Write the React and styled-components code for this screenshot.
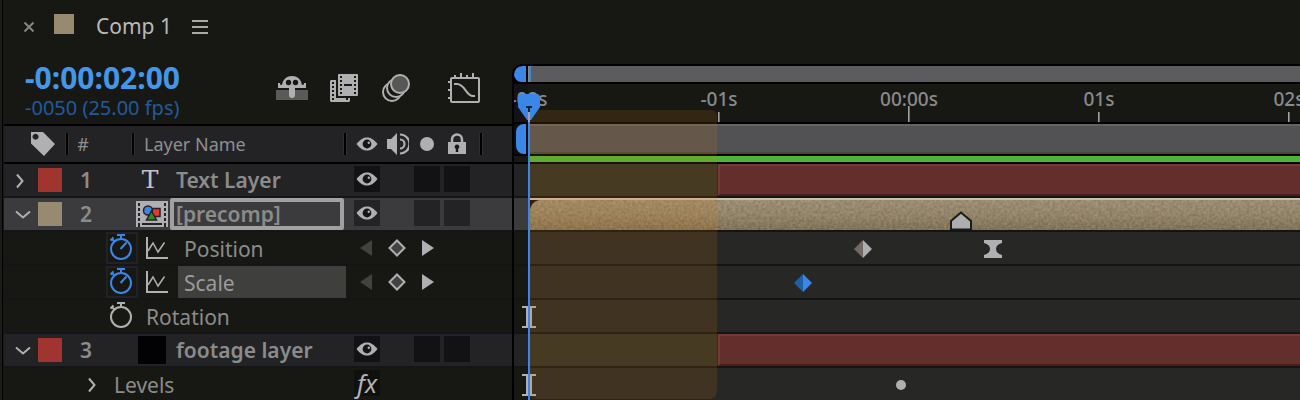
import React, { useState } from "react";
import styled, { createGlobalStyle, css } from "styled-components";

const GlobalStyle = createGlobalStyle`
  * { box-sizing: border-box; }
  body {
    margin: 0;
    background: #171814;
    color: #8b8b8b;
    font-family: "Noto Sans", "Open Sans", sans-serif;
    overflow: hidden;
  }
  button, input { font: inherit; color: inherit; }
`;

/* ---------- time scale ---------- */
const SECOND = 190;
const ZERO = 395;
const timeToX = (t) => Math.round(ZERO + t * SECOND);

/* ---------- shell ---------- */
const Panel = styled.main`
  min-height: 100vh;
  background: #171814;
  border-left: 2px solid #1c1c1b;
  box-shadow: inset 1px 0 0 #000;
  padding-left: 2px;
`;

const PlainButton = styled.button`
  display: inline-flex;
  align-items: center;
  justify-content: center;
  padding: 0;
  border: 0;
  background: none;
  line-height: 0;
  flex: none;
`;

const TabBar = styled.header`
  display: flex;
  align-items: center;
  height: 52px;
  padding: 2px 0 0 19px;
`;

const TabSwatch = styled.span`
  width: 20px;
  height: 20px;
  margin: 0 22px 6px 19px;
  background: #988a70;
`;

const TabTitle = styled.h1`
  margin: 0 20px 2px 0;
  font-size: 21px;
  line-height: 28px;
  font-weight: 400;
  color: #b9b9b9;
`;

const Body = styled.div`
  display: flex;
  align-items: flex-start;
`;

const Outline = styled.section`
  width: 508px;
  flex: none;
`;

const Controls = styled.div`
  display: flex;
  justify-content: space-between;
  height: 72px;
  padding: 9px 32px 0 21px;
`;

const Timecode = styled.div`
  font-size: 30px;
  line-height: 34px;
  font-weight: 700;
  color: #4496e8;
`;

const FrameInfo = styled.div`
  font-size: 20px;
  line-height: 26px;
  color: #205a9f;
`;

const Tools = styled.div`
  display: flex;
  align-items: center;
  gap: 22px;
  height: 54px;
  & > :nth-child(3) { margin-left: 2px; }
  & > :last-child { margin-left: 16px; }
`;

/* ---------- outline columns ---------- */
const HeaderRow = styled.div`
  display: flex;
  align-items: center;
  height: 40px;
  border-top: 2px solid #000;
  border-bottom: 2px solid #000;
  background: #232326;
  font-size: 18px;
`;

const Divider = styled.span`
  flex: none;
  width: 4px;
  height: 22px;
  background: #000;
  border-left: 1px solid #2f2f2c;
  border-right: 1px solid #2f2f2c;
`;

const HeadCell = styled.span`
  flex: none;
  display: flex;
  align-items: center;
  justify-content: ${(p) => p.$align || "center"};
  width: ${(p) => p.$w}px;
  padding-left: ${(p) => p.$pad || 0}px;
  color: #8f8f90;
`;

const Rows = styled.div`
  display: grid;
  gap: 2px;
  background: #141518;
`;

const Row = styled.div`
  display: flex;
  align-items: center;
  height: 32px;
  background: #171814;
  font-size: 21px;
  line-height: 28px;
`;

const LayerLine = styled(Row)`
  background: ${(p) => (p.$selected ? "#3b3b3d" : "#232326")};
  font-weight: 600;
`;

const Twirl = styled(PlainButton)`
  justify-content: flex-start;
  width: 34px;
  height: 32px;
  padding: 2px 0 0 11px;
`;

const Swatch = styled.span`
  flex: none;
  width: 24px;
  height: 24px;
  background: ${(p) => p.$color};
`;

const Index = styled.span`
  flex: none;
  width: 48px;
  text-align: center;
`;

const TypeIcon = styled.span`
  display: flex;
  flex: none;
  align-items: center;
  justify-content: center;
  width: 32px;
  height: 32px;
  margin: 0 2px 0 26px;
`;

const TextGlyph = styled.span`
  padding-right: 4px;
  font-family: "DejaVu Serif", serif;
  font-weight: 400;
  font-size: 25px;
  line-height: 28px;
  color: #c4c4c6;
`;

const Solid = styled.span`
  width: 28px;
  height: 28px;
  background: #020204;
`;

const LayerName = styled.span`
  flex: none;
  width: 174px;
  padding-left: 6px;
`;

const NameInput = styled.input`
  flex: none;
  width: 174px;
  height: 32px;
  padding: 0 0 0 2px;
  border: 4px solid #a1a1a1;
  border-radius: 2px;
  background: #3b3b3d;
  font-weight: 600;
  outline: 0;
`;

const Switches = styled.span`
  display: flex;
  flex: none;
  gap: 4px;
  margin-left: 10px;
  & > :first-child { margin-right: 30px; }
`;

const SwitchBox = styled(PlainButton)`
  width: 26px;
  height: 26px;
  margin-bottom: 2px;
  background: ${(p) => (p.$selected ? "#232326" : "#121214")};
`;

const PropertyLine = styled(Row)`
  padding-left: ${(p) => p.$indent}px;
`;

const Stopwatch = styled(PlainButton)`
  width: 32px;
  height: 32px;
  padding: 0 2px 2px 0;
  border: 2px solid ${(p) => (p.$on ? "#222226" : "transparent")};
`;

const GraphToggle = styled(PlainButton)`
  width: 22px;
  margin: 0 10px 0 8px;
`;

const PropName = styled.span`
  flex: none;
  height: 32px;
  padding: 3px 6px 0;
  width: ${(p) => (p.$wide ? 168 : 96)}px;
  ${(p) => p.$selected && css`background: #3f3f3e; color: #9b9b9b;`}
`;

const RotationName = styled(PropName)`
  padding-left: 8px;
`;

const KeyNav = styled.span`
  display: flex;
  align-items: center;
  gap: 16px;
  margin-left: 14px;
`;

const EffectTwirl = styled(Twirl)`
  width: 32px;
`;

const EffectName = styled(PropName)`
  width: 246px;
`;

const FxBox = styled(SwitchBox)`
  background: #10100f;
  color: #b2b2b4;
  font-style: italic;
  font-size: 25px;
  line-height: 26px;
`;

/* ---------- timeline ---------- */
const Timeline = styled.section`
  position: relative;
  flex: 1;
  min-width: 0;
  margin-top: 12px;
  border-left: 2px solid #000;
  border-top: 2px solid #000;
  border-top-left-radius: 10px;
  overflow: hidden;
  background: #171814;
`;

const Navigator = styled.div`
  display: flex;
  gap: 2px;
  height: 18px;
  border-bottom: 2px solid #000;
  background: #000;
`;

const NavHandle = styled.span`
  width: 12px;
  flex: none;
  background: #3b87e8;
  border-radius: 9px 0 0 8px;
`;

const NavRange = styled.span`
  flex: 1;
  background: linear-gradient(90deg, #8a8883 1px, #3b87e8 1px 3px, #5c5c5e 3px);
`;

const Ruler = styled.div`
  display: flex;
  height: 40px;
  border-bottom: 2px solid #000;
  background: linear-gradient(90deg, #121316 14px, #171814 14px);
  overflow: hidden;
  & > :first-child { margin-left: -80px; }
`;

const Mark = styled.div`
  display: flex;
  flex: none;
  flex-direction: column;
  align-items: center;
  justify-content: space-between;
  width: ${SECOND}px;
  font-size: 19px;
  line-height: 30px;
  font-weight: 500;
  color: #8a8a8b;
`;

const Tick = styled.span`
  width: 2px;
  height: ${(p) => (p.$zero ? 16 : 10)}px;
  margin-top: -8px;
  background: linear-gradient(90deg, #a5a29d 50%, #6b6965 50%);
`;

const WorkArea = styled.div`
  display: flex;
  gap: 4px;
  height: 32px;
  padding-left: 2px;
  border-bottom: 2px solid #000;
  background: #0d0d10;
`;

const WorkHandle = styled.span`
  flex: none;
  width: 10px;
  background: #3b87e8;
  border-radius: 8px 0 0 8px;
`;

const WorkRange = styled.span`
  flex: 1;
  background: #525254;
  border-top: 2px solid #626265;
  border-bottom: 2px solid #474746;
`;

const CacheBar = styled.div`
  height: 8px;
  border-bottom: 2px solid #000;
  background: linear-gradient(90deg, #171814 14px, #4cb538 14px);
`;

const Lanes = styled.div`
  display: grid;
  gap: 2px;
  background: #131416;
`;

const laneColors = {
  layer: ["#232326", "#2d3026"],
  selected: ["#3b3b3d", "#1a0d0d"],
  property: ["#171814", "#272725"],
};

const Lane = styled.div`
  position: relative;
  height: 32px;
  overflow: hidden;
  background: ${(p) => {
    const [before, after] = laneColors[p.$kind];
    return `linear-gradient(90deg, ${before} 16px, ${after} 16px)`;
  }};
`;

const FootageBar = styled.div`
  height: 32px;
  margin-left: ${(p) => timeToX(p.$from) - 1}px;
  background: #642e2c;
  border: 2px solid #733a36;
  border-right: 0;
  border-bottom-color: #4c1c1c;
`;

const PrecompBar = styled.div`
  height: 32px;
  margin-left: 16px;
  border-top: 2px solid #c9bea9;
`;

const PrecompFill = styled.div`
  height: 30px;
  border-top-left-radius: 11px;
  overflow: hidden;
  background: linear-gradient(#9d8f74, #93856a 50%, #7e7054);
  & > svg { display: block; }
`;

const Item = styled.span`
  position: absolute;
  left: ${(p) => timeToX(p.$t)}px;
  top: ${(p) => (p.$bottom ? "auto" : "50%")};
  bottom: ${(p) => (p.$bottom ? "0" : "auto")};
  transform: translate(-50%, ${(p) => (p.$bottom ? "0" : "-50%")});
  padding-top: ${(p) => (p.$bottom ? 0 : 2)}px;
  display: flex;
`;

const TrimShade = styled.div`
  position: absolute;
  left: 16px;
  top: 44px;
  bottom: 1px;
  width: 187px;
  border-radius: 6px 6px 8px 8px;
  background: rgba(215, 122, 14, 0.15);
  pointer-events: none;
`;

const Playhead = styled.div`
  position: absolute;
  left: 14px;
  top: 50px;
  bottom: 0;
  width: 2px;
  background: #3b87e8;
`;

const PlayheadGrip = styled.div`
  position: absolute;
  left: 4px;
  top: 28px;
  display: flex;
`;

/* ---------- icons ---------- */
const ICON = "#b0b0b2";

const CloseIcon = () => (
  <svg width="12" height="12" fill="none" stroke="#858585" strokeWidth="2"><path d="M1.500 1.500l9 9M10.500 1.500l-9 9" /></svg>
);
const MenuIcon = () => (
  <svg width="16" height="14" fill="#a9a9a9"><path d="M0 0h16v2H0zM0 6h16v2H0zM0 12h16v2H0z" /></svg>
);
const ShyIcon = () => (
  <svg width="32" height="24">
    <path fill="#5a5a59" d="M0 14h32v10H0z" />
    <path fill={ICON} d="M6 9C7 3 11 0 16 0s9 3 10 9l2-.5V7h2v5H19v7a2.500 2.500 0 0 1-6 0v-7H2V7h2v1.500z" />
    <circle cx="12.500" cy="6.500" r="2.700" fill="#171814" />
    <circle cx="19.500" cy="6.500" r="2.700" fill="#171814" />
  </svg>
);
const FrameBlendIcon = () => (
  <svg width="28" height="28">
    <path fill={ICON} d="M1 6h5v18h14v3l-1 1H1l-1-1V7z" />
    <path fill="#171814" d="M2 8h2v2H2zM2 12h2v2H2zM2 16h2v2H2zM2 20h2v2H2zM2 24h2v2H2zM16 24h2v2h-2z" />
    <rect x="8" width="20" height="22" rx="1" fill={ICON} />
    <path fill="#171814" d="M10 2h2v2h-2zM10 6h2v2h-2zM10 10h2v2h-2zM10 14h2v2h-2zM10 18h2v2h-2zM24 2h2v2h-2zM24 6h2v2h-2zM24 10h2v2h-2zM24 14h2v2h-2zM24 18h2v2h-2zM14 10h8v2h-8z" />
  </svg>
);
const MotionBlurIcon = () => (
  <svg width="28" height="28" stroke={ICON} strokeWidth="2" fill="#171814">
    <circle cx="10" cy="18" r="9" />
    <circle cx="14" cy="14" r="9" />
    <circle cx="18" cy="10" r="9" fill="#575756" />
  </svg>
);
const GraphEditorIcon = () => (
  <svg width="32" height="30" stroke={ICON} strokeWidth="2" fill="none">
    <rect x="3" y="5" width="28" height="24" rx="1" />
    <path d="M7 2v3M13 0v5M19 2v3M25 0v5M0 9h3M0 17h3M0 25h3M6 11h3c8 0 9 12 16 12h2" />
  </svg>
);
const TagIcon = () => (
  <svg width="24" height="24"><path fill={ICON} fillRule="evenodd" d="M0 0h12l12 12-11 12L0 11.500zM4.500 1.800a3 3 0 1 0 .1 0z" /></svg>
);
const EyeIcon = () => (
  <svg width="22" height="14">
    <path fill={ICON} d="M.5 7C4.500 2 7.500.5 11 .5S17.500 2 21.500 7C17.500 12 14.500 13.500 11 13.500S4.500 12 .5 7z" />
    <circle cx="11" cy="7" r="4.400" fill="#161618" />
    <circle cx="12.800" cy="5.800" r="1.200" fill={ICON} />
  </svg>
);
const SpeakerIcon = () => (
  <svg width="24" height="24" fill="none" stroke={ICON} strokeWidth="2.200">
    <path fill={ICON} stroke="none" d="M0 7h4l6-6v22l-6-6H0z" />
    <path d="M13 2.500a9.500 9.500 0 0 1 0 19M13 7.500a4.500 4.500 0 0 1 0 9" />
  </svg>
);
const DotIcon = ({ size = 14 }) => (
  <svg width={size} height={size}><circle cx={size / 2} cy={size / 2} r={size / 2} fill={ICON} /></svg>
);
const LockIcon = () => (
  <svg width="18" height="22">
    <path d="M4 10V6.500a5 5 0 0 1 10 0V10" fill="none" stroke={ICON} strokeWidth="2.500" />
    <path fill={ICON} d="M0 9h18v12H0z" />
    <path fill="#161618" d="M9 11.500a2.300 2.300 0 0 1 1.200 4.300V19H7.800v-3.200A2.300 2.300 0 0 1 9 11.500z" />
  </svg>
);
const ChevronIcon = ({ open }) =>
  open ? (
    <svg width="16" height="10" fill="none" stroke={ICON} strokeWidth="2"><path d="M1 1.500l7 6L15 1.500" /></svg>
  ) : (
    <svg width="10" height="16" fill="none" stroke={ICON} strokeWidth="2"><path d="M2 1.500l5.500 6.500L2 14.500" /></svg>
  );
const CompIcon = () => (
  <svg width="32" height="26">
    <path fill={ICON} d="M0 0h32v26H0z" />
    <path fill="#232326" d="M2 2h2v3H2zM2 7h2v3H2zM2 12h2v3H2zM2 17h2v3H2zM2 22h2v4H2zM28 2h2v3h-2zM28 7h2v3h-2zM28 12h2v3h-2zM28 17h2v3h-2zM28 22h2v4h-2zM6 22h20v2H6z" />
    <path fill="#e5392f" stroke="#232326" strokeWidth="1.500" d="M15.500 7.500h8.500v8h-8.500z" />
    <circle cx="12" cy="9.500" r="4.500" fill="#3b87e8" stroke="#232326" strokeWidth="1.500" />
    <path fill="#3c8526" stroke="#232326" strokeWidth="1.500" d="M15.500 10l5 9h-10z" />
  </svg>
);
const StopwatchIcon = ({ on }) => (
  <svg width="24" height="28" fill="none" stroke={on ? "#3b87e8" : ICON} strokeWidth="2">
    <circle cx="12" cy="16" r="10" />
    <path d="M8 2h8M12 2v4M1.500 7.500l3-3M3 6l2.500 2.500" />
    {on && <path d="M11.500 16l6-6.500" />}
  </svg>
);
const GraphIcon = () => (
  <svg width="22" height="24" fill="none" stroke={ICON} strokeWidth="2">
    <path d="M1 1v21h21" />
    <path strokeWidth="1.500" d="M2 15l5-8 5 9L18.500 6.500" />
  </svg>
);
const ArrowIcon = ({ dir, dim }) => (
  <svg width="12" height="16"><path fill={dim ? "#424240" : ICON} d={dir === "left" ? "M12 0v16L0 8z" : "M0 0v16l12-8z"} /></svg>
);
const KeyIcon = () => (
  <svg width="18" height="18"><path d="M9 1.500L16.500 9 9 16.500 1.500 9z" fill="#424241" stroke={ICON} strokeWidth="2" /></svg>
);
const Diamond = ({ left, right }) => (
  <svg width="18" height="18"><path fill={left} d="M9 0v18L0 9z" /><path fill={right} d="M9 0v18l9-9z" /></svg>
);
const Hourglass = () => (
  <svg width="18" height="18"><path fill={ICON} d="M0 0h18v3c-4 1-6 3-6 6s2 5 6 6v3H0v-3c4-1 6-3 6-6S4 4 0 3z" /></svg>
);
const MarkerIcon = () => (
  <svg width="22" height="20"><path fill="#aeaeb0" stroke="#1c1b18" strokeWidth="2" d="M1 19.500v-8.500L11 2.500l10 8.500v8.500z" /></svg>
);
const IBeam = () => (
  <svg width="14" height="22"><path fill={ICON} d="M0 0h14v2h-4v18h4v2H0v-2h4V2H0z" /></svg>
);
const GripIcon = () => (
  <svg width="22" height="28">
    <path fill="#3b87e8" d="M2 0h18l2 2v11L13 26h-4L0 13V2z" />
    <path fill="#14213a" d="M8 12h6v2h-2v4h-2v-4H8z" />
    <path fill="#a8a29a" d="M10 18h2v10h-2z" />
  </svg>
);
const Grain = () => (
  <svg width="100%" height="30" aria-hidden="true">
    <filter id="grain" x="0" y="0" width="100%" height="100%" colorInterpolationFilters="sRGB">
      <feTurbulence type="fractalNoise" baseFrequency="0.35" numOctaves="2" seed="4" />
      <feColorMatrix values="1.500 0 0 0 -0.200  1.200 0.200 0 0 -0.200  .8 0 0.600 0 -0.300  0 0 0 0 .14" />
    </filter>
    <rect width="100%" height="30" filter="url(#grain)" />
  </svg>
);

/* ---------- composed rows ---------- */
const LayerRow = ({ index, color, open, selected, icon, children }) => (
  <LayerLine $selected={selected}>
    <Twirl aria-label={open ? "Collapse" : "Expand"}><ChevronIcon open={open} /></Twirl>
    <Swatch $color={color} />
    <Index>{index}</Index>
    <TypeIcon>{icon}</TypeIcon>
    {children}
    <Switches>
      <SwitchBox $selected={selected} aria-label="Visibility"><EyeIcon /></SwitchBox>
      <SwitchBox $selected={selected} aria-label="Solo" />
      <SwitchBox $selected={selected} aria-label="Lock" />
    </Switches>
  </LayerLine>
);

const AnimatedRow = ({ name, selected }) => (
  <PropertyLine $indent={102}>
    <Stopwatch $on aria-label="Stopwatch"><StopwatchIcon on /></Stopwatch>
    <GraphToggle aria-label="Show graph"><GraphIcon /></GraphToggle>
    <PropName $wide $selected={selected}>{name}</PropName>
    <KeyNav>
      <PlainButton aria-label="Previous keyframe"><ArrowIcon dir="left" dim /></PlainButton>
      <PlainButton aria-label="Toggle keyframe"><KeyIcon /></PlainButton>
      <PlainButton aria-label="Next keyframe"><ArrowIcon dir="right" /></PlainButton>
    </KeyNav>
  </PropertyLine>
);

const marks = ["-02s", "-01s", "00:00s", "01s", "02s"];

export default function App() {
  const [name, setName] = useState("[precomp]");
  return (
    <Panel>
      <GlobalStyle />
      <TabBar>
        <PlainButton aria-label="Close tab"><CloseIcon /></PlainButton>
        <TabSwatch />
        <TabTitle>Comp 1</TabTitle>
        <PlainButton aria-label="Panel menu"><MenuIcon /></PlainButton>
      </TabBar>
      <Body>
        <Outline>
          <Controls>
            <div>
              <Timecode>-0:00:02:00</Timecode>
              <FrameInfo>-0050 (25.00 fps)</FrameInfo>
            </div>
            <Tools>
              <PlainButton aria-label="Hide shy layers"><ShyIcon /></PlainButton>
              <PlainButton aria-label="Frame blending"><FrameBlendIcon /></PlainButton>
              <PlainButton aria-label="Motion blur"><MotionBlurIcon /></PlainButton>
              <PlainButton aria-label="Graph editor"><GraphEditorIcon /></PlainButton>
            </Tools>
          </Controls>
          <HeaderRow>
            <HeadCell $w={61} $pad={27} $align="flex-start"><TagIcon /></HeadCell>
            <Divider />
            <HeadCell $w={28}>#</HeadCell>
            <HeadCell $w={34} />
            <Divider />
            <HeadCell $w={208} $pad={9} $align="flex-start">Layer Name</HeadCell>
            <Divider />
            <HeadCell $w={40}><EyeIcon /></HeadCell>
            <HeadCell $w={22}><SpeakerIcon /></HeadCell>
            <HeadCell $w={36}><DotIcon /></HeadCell>
            <HeadCell $w={24}><LockIcon /></HeadCell>
            <HeadCell $w={10} />
            <Divider />
          </HeaderRow>
          <Rows>
            <LayerRow index="1" color="#a0342f" icon={<TextGlyph>T</TextGlyph>}>
              <LayerName>Text Layer</LayerName>
            </LayerRow>
            <LayerRow index="2" color="#988a70" open selected icon={<CompIcon />}>
              <NameInput aria-label="Layer name" value={name} onChange={(e) => setName(e.target.value)} />
            </LayerRow>
            <AnimatedRow name="Position" />
            <AnimatedRow name="Scale" selected />
            <PropertyLine $indent={102}>
              <Stopwatch aria-label="Stopwatch"><StopwatchIcon /></Stopwatch>
              <RotationName>Rotation</RotationName>
            </PropertyLine>
            <LayerRow index="3" color="#a0342f" open icon={<Solid />}>
              <LayerName>footage layer</LayerName>
            </LayerRow>
            <PropertyLine $indent={72}>
              <EffectTwirl aria-label="Expand"><ChevronIcon /></EffectTwirl>
              <EffectName>Levels</EffectName>
              <FxBox aria-label="Effects">fx</FxBox>
            </PropertyLine>
          </Rows>
        </Outline>
        <Timeline>
          <Navigator><NavHandle /><NavRange /></Navigator>
          <Ruler>
            {marks.map((m) => (
              <Mark key={m}>{m}<Tick $zero={m === "00:00s"} /></Mark>
            ))}
          </Ruler>
          <WorkArea><WorkHandle /><WorkRange /></WorkArea>
          <CacheBar />
          <Lanes>
            <Lane $kind="layer"><FootageBar $from={-1} /></Lane>
            <Lane $kind="selected">
              <PrecompBar><PrecompFill><Grain /></PrecompFill></PrecompBar>
              <Item $t={0.275} $bottom><MarkerIcon /></Item>
            </Lane>
            <Lane $kind="property">
              <Item $t={-0.24}><Diamond left="#736b63" right="#aeaeb0" /></Item>
              <Item $t={0.44}><Hourglass /></Item>
            </Lane>
            <Lane $kind="property">
              <Item $t={-0.56}><Diamond left="#215ea8" right="#3b87e8" /></Item>
            </Lane>
            <Lane $kind="property"><Item $t={-2}><IBeam /></Item></Lane>
            <Lane $kind="layer"><FootageBar $from={-1} /></Lane>
            <Lane $kind="property">
              <Item $t={-2}><IBeam /></Item>
              <Item $t={-0.04}><DotIcon size={10} /></Item>
            </Lane>
          </Lanes>
          <TrimShade />
          <Playhead />
          <PlayheadGrip><GripIcon /></PlayheadGrip>
        </Timeline>
      </Body>
    </Panel>
  );
}
